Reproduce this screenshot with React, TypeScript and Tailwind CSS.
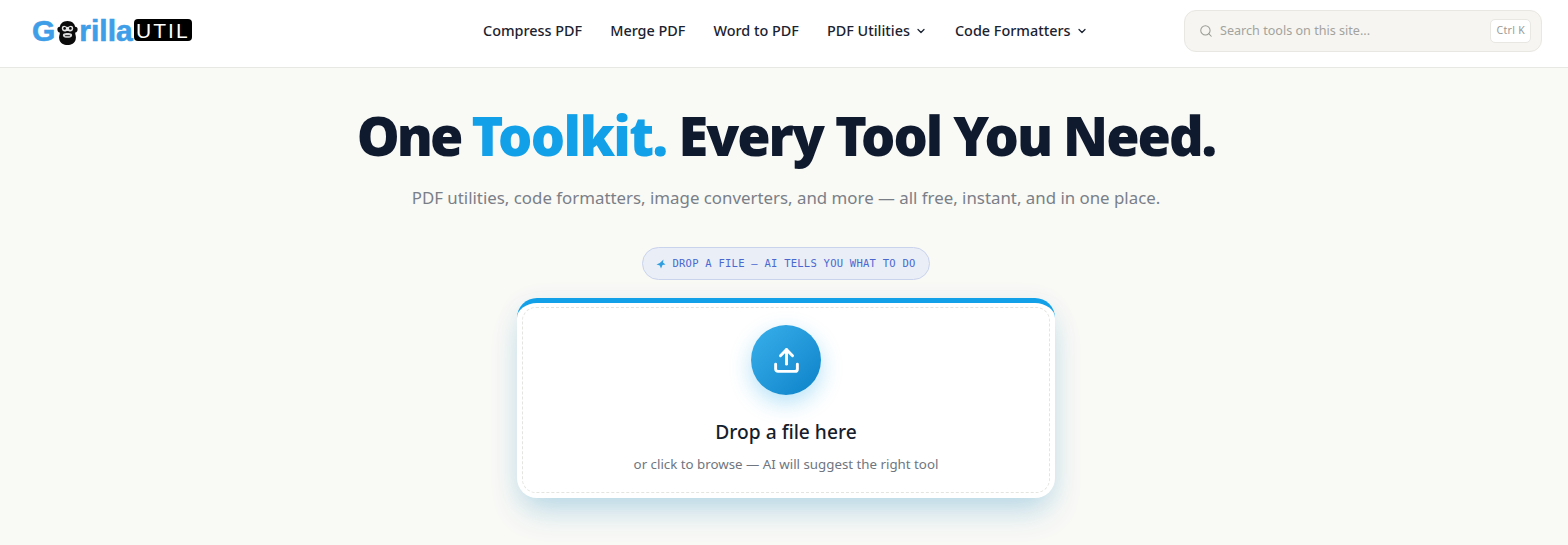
import { ChevronDown, Search, Upload } from "lucide-react";

const nav = [
  { label: "Compress PDF" },
  { label: "Merge PDF" },
  { label: "Word to PDF" },
  { label: "PDF Utilities", chevron: true },
  { label: "Code Formatters", chevron: true },
];

function GorillaHead() {
  return (
    <svg width="21" height="26" viewBox="0 0 22 26" className="ml-[2px] shrink-0 translate-y-[2px]">
      <path d="M11 0.5C6 0.5 3.500 3.500 3 6.500 1 6.500 0 8 0.500 10c.3 1.500 1.500 2.500 2.500 2.500C3 15 1.500 16.500 2.500 20c1 3.500 4.500 5.500 8.500 5.500s7.500-2 8.500-5.500c1-3.500-.5-5-.5-7.500 1 0 2.200-1 2.500-2.500C22 8 21 6.500 19 6.500 18.500 3.500 16 0.500 11 0.500z" fill="#0b0b0b" />
      <path d="M5 8c0-2.500 2.700-3.200 4-2 1.200.8 2.800.8 4 0 1.300-1.200 4-.5 4 2 0 2-1.500 3.500-3 3.500-1.300 0-2-.5-3-.5s-1.700.5-3 .5C6.500 11.500 5 10 5 8z" fill="#e4e4e4" />
      <circle cx="8" cy="8.200" r="1.400" fill="#0b0b0b" />
      <circle cx="14" cy="8.200" r="1.400" fill="#0b0b0b" />
      <path d="M6.500 14c2-1.200 7-1.200 9 0 .8 1.500 0 3-1 3.500-2 .8-5 .8-7 0-1-.5-1.800-2-1-3.500z" fill="#d8d8d8" />
      <path d="M8.500 15.800h5" stroke="#0b0b0b" strokeWidth="1" />
    </svg>
  );
}

function Logo() {
  return (
    <div className="flex w-[160px] shrink-0 items-center font-['Liberation_Sans',sans-serif]">
      <span className="text-[30px] leading-none font-bold text-[#3f9ee8] [-webkit-text-stroke:0.6px_#3f9ee8]">G</span>
      <GorillaHead />
      <span className="ml-[1px] text-[30px] leading-none font-bold text-[#3f9ee8] [-webkit-text-stroke:0.6px_#3f9ee8]">rilla</span>
      <span className="ml-[1px] flex h-[22px] w-[59px] -translate-y-[1px] items-center justify-center rounded-[4px] bg-black text-[21px] leading-none tracking-[2px] text-white">
        UTIL
      </span>
    </div>
  );
}

export default function App() {
  return (
    <div className="h-[545px] overflow-hidden bg-[#f9f9f6] font-['Noto_Sans',sans-serif]">
      <header className="flex h-[68px] items-center border-b border-[#e7e7e4] bg-white pr-[26px] pb-[5px] pl-[32px]">
        <Logo />
        <nav className="ml-[291px] flex items-center gap-[28px] text-[14.4px] font-medium text-[#1b2230]">
          {nav.map((n) => (
            <span key={n.label} className="flex items-center gap-[5px]">
              {n.label}
              {n.chevron && <ChevronDown size={12} strokeWidth={2.5} />}
            </span>
          ))}
        </nav>
        <div className="ml-auto flex h-[42px] w-[358px] items-center rounded-[12px] border border-[#e8e7e2] bg-[#f6f5f1] pr-[10px] pl-[14px]">
          <Search size={14} strokeWidth={1.75} className="text-[#9a9a94]" />
          <span className="ml-[7px] text-[12.6px] text-[#a3a39d]">Search tools on this site...</span>
          <span className="ml-auto flex h-[24px] items-center rounded-[5px] border border-[#e8e7e2] bg-white px-[5px] text-[10.5px] tracking-[0.3px] text-[#9a9a94]">
            Ctrl K
          </span>
        </div>
      </header>
      <main className="flex flex-col items-center pl-[4px]">
        <h1 className="mt-[30px] text-[54px] leading-[74px] font-black tracking-[-2px] text-[#101a2e]">
          <span className="tracking-[-3px]">One </span>
          <span className="tracking-[-1.6px] text-[#12a0e8]">Toolkit.</span> Every Tool You Need.
        </h1>
        <p className="mt-[13px] text-[16.85px] leading-[26px] text-[#7a7f87]">
          PDF utilities, code formatters, image converters, and more — all free, instant, and in one place.
        </p>
        <div className="mt-[36px] flex h-[33px] items-center gap-[6px] rounded-full border border-[#c9d3ec] bg-[#e9eef7] px-[13px] font-['DejaVu_Sans_Mono',monospace] text-[10.5px] tracking-[0.25px] text-[#4a68d0]">
          <svg width="10" height="10" viewBox="0 0 10 10">
            <path d="M7.500 0.500 7 3.500 9.500 5.500 6.500 6 5 9.500 3.800 6.500 0.500 5.500 3.800 4z" fill="#2f9fe0" />
          </svg>
          DROP A FILE — AI TELLS YOU WHAT TO DO
        </div>
        <div className="mt-[18px] h-[200px] w-[538px] rounded-[20px] border-t-[5px] border-[#12a0e8] bg-white p-[5px] pt-[4px] shadow-[0_18px_32px_-6px_rgba(14,130,190,0.24),0_4px_24px_rgba(14,130,190,0.08)]">
          <div className="flex h-[186px] flex-col items-center rounded-[14px] border border-dashed border-[#e4e4e0]">
            <div className="mt-[17px] flex size-[70px] items-center justify-center rounded-full bg-gradient-to-br from-[#38b0ec] to-[#0882c8] text-white shadow-[0_8px_22px_rgba(14,160,233,0.3)]">
              <Upload size={29} strokeWidth={2.4} />
            </div>
            <h2 className="mt-[23px] text-[19.2px] leading-[28px] font-medium text-[#161d2c]">Drop a file here</h2>
            <p className="mt-[9px] text-[13.3px] leading-[18px] text-[#6f7680]">
              or click to browse — AI will suggest the right tool
            </p>
          </div>
        </div>
      </main>
    </div>
  );
}
